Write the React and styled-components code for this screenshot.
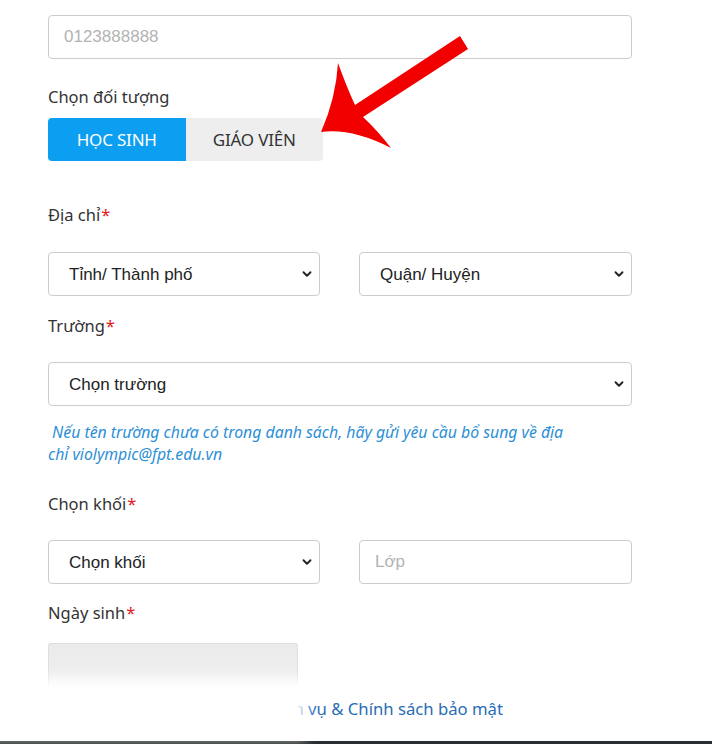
import React from 'react';
import styled, { createGlobalStyle } from 'styled-components';
import { ChevronDown } from 'lucide-react';

const GlobalStyle = createGlobalStyle`
  html, body {
    margin: 0;
    padding: 0;
    background: #ffffff;
  }
  * {
    box-sizing: border-box;
  }
`;

const Page = styled.div`
  position: relative;
  min-height: 744px;
  display: flex;
  flex-direction: column;
  font-family: "Noto Sans", "Open Sans", sans-serif;
  color: #333333;
`;

const Form = styled.div`
  width: 584px;
  margin-left: 48px;
  padding-top: 15px;
  display: flex;
  flex-direction: column;
`;

const Label = styled.div`
  font-size: 16.5px;
  line-height: 24px;
  height: 24px;
  color: #333333;
  margin-top: ${p => p.$top}px;
  margin-bottom: ${p => p.$bottom}px;
`;

const Star = styled.span`
  color: #e4161b;
  margin-left: 1px;
`;

const TextInput = styled.input`
  width: 100%;
  height: 44px;
  border: 1px solid #cccccc;
  border-radius: 4px;
  padding: 0 15px;
  font-family: "Liberation Sans", Arial, sans-serif;
  font-size: 17px;
  color: #333333;
  outline: none;

  &::placeholder {
    color: #b3b3b3;
  }
`;

const Toggle = styled.div`
  display: flex;
  width: 275px;
`;

const ToggleButton = styled.button`
  flex: 1;
  height: 43px;
  border: none;
  font-family: "Noto Sans", "Open Sans", sans-serif;
  font-size: 17px;
  letter-spacing: -0.2px;
  cursor: pointer;
  background: ${p => (p.$active ? '#0b9ef1' : '#eeeeee')};
  color: ${p => (p.$active ? '#ffffff' : '#333333')};
  border-radius: ${p => (p.$active ? '4px 0 0 4px' : '0 4px 4px 0')};
`;

const Row = styled.div`
  display: grid;
  grid-template-columns: 272px 273px;
  column-gap: 39px;
`;

const SelectWrap = styled.div`
  position: relative;
  height: 44px;
`;

const Select = styled.select`
  width: 100%;
  height: 44px;
  appearance: none;
  -webkit-appearance: none;
  border: 1px solid #cccccc;
  border-radius: 4px;
  background: #ffffff;
  padding: 0 40px 0 20px;
  font-family: "Liberation Sans", Arial, sans-serif;
  font-size: 17px;
  color: #222222;
  outline: none;
`;

const Chevron = styled.span`
  position: absolute;
  right: 6px;
  top: 15px;
  display: flex;
  pointer-events: none;
  color: #222222;
`;

const Hint = styled.p`
  margin: 15px 0 0 0;
  font-family: "Noto Sans", "Open Sans", sans-serif;
  font-style: italic;
  font-size: 15.8px;
  line-height: 22px;
  color: #2d8fd6;
  width: 525px;
`;

const DateBox = styled.div`
  width: 250px;
  height: 50px;
  border: 1px solid #dedede;
  border-bottom: none;
  border-radius: 3px 3px 0 0;
  background: linear-gradient(#ebebeb, #eeeeee 60%, #f6f6f6);
`;

const Terms = styled.div`
  margin-top: 4px;
  padding-left: 129px;
  font-size: 16.7px;
  line-height: 24px;
  color: #2a6db5;
  white-space: nowrap;
`;

const Fade = styled.div`
  position: absolute;
  left: 0;
  top: 686px;
  width: 298px;
  height: 44px;
  background: #ffffff;
  box-shadow: 0 0 12px 8px rgba(255, 255, 255, 0.92);
`;

const BottomBar = styled.div`
  margin-top: auto;
  height: 3px;
  background: #2a2d2f;
`;

const Arrow = styled.svg`
  position: absolute;
  left: 0;
  top: 0;
  pointer-events: none;
`;

const ChevronSelect = ({ children }) => (
  <SelectWrap>
    <Select>
      <option>{children}</option>
    </Select>
    <Chevron>
      <ChevronDown size={14} strokeWidth={3.2} />
    </Chevron>
  </SelectWrap>
);

export default function App() {
  return (
    <Page>
      <GlobalStyle />
      <Form>
        <TextInput placeholder="0123888888" />

        <Label $top={26} $bottom={9}>Chọn đối tượng</Label>
        <Toggle>
          <ToggleButton $active>HỌC SINH</ToggleButton>
          <ToggleButton>GIÁO VIÊN</ToggleButton>
        </Toggle>

        <Label $top={42} $bottom={25}>Địa chỉ<Star>*</Star></Label>
        <Row>
          <ChevronSelect>Tỉnh/ Thành phố</ChevronSelect>
          <ChevronSelect>Quận/ Huyện</ChevronSelect>
        </Row>

        <Label $top={18} $bottom={24}>Trường<Star>*</Star></Label>
        <ChevronSelect>Chọn trường</ChevronSelect>
        <Hint>
          &nbsp;Nếu tên trường chưa có trong danh sách, hãy gửi yêu cầu bổ sung về địa chỉ violympic@fpt.edu.vn
        </Hint>

        <Label $top={27} $bottom={24}>Chọn khối<Star>*</Star></Label>
        <Row>
          <ChevronSelect>Chọn khối</ChevronSelect>
          <TextInput placeholder="Lớp" />
        </Row>

        <Label $top={17} $bottom={18}>Ngày sinh<Star>*</Star></Label>
        <DateBox />
        <Terms>Điều khoản dịch vụ &amp; Chính sách bảo mật</Terms>
      </Form>

      <Fade />

      <Arrow width="712" height="744" viewBox="0 0 712 744">
        <path
          d="M 460 36 L 468 49 L 363 117 Q 378 131 391 148 Q 352 128 321 132 Q 336 98 338 63 Q 347 88 355 105 Z"
          fill="#f20000"
        />
      </Arrow>

      <BottomBar />
    </Page>
  );
}
